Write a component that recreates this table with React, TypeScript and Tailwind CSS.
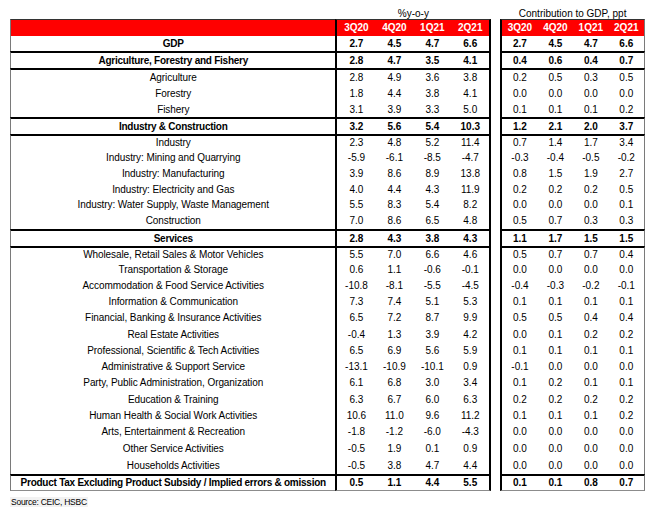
import React from 'react';

type Row = {
  label: string;
  bold?: boolean;
  line?: boolean;
  last?: boolean;
  h: string;
  yoy: string[];
  ppt: string[];
};

const rows: Row[] = [
  { label: 'GDP', bold: true, h: 'h-[15px]', yoy: ['2.7', '4.5', '4.7', '6.6'], ppt: ['2.7', '4.5', '4.7', '6.6'] },
  { label: 'Agriculture, Forestry and Fishery', bold: true, line: true, h: 'h-[17px]', yoy: ['2.8', '4.7', '3.5', '4.1'], ppt: ['0.4', '0.6', '0.4', '0.7'] },
  { label: 'Agriculture', line: true, h: 'h-[18px]', yoy: ['2.8', '4.9', '3.6', '3.8'], ppt: ['0.2', '0.5', '0.3', '0.5'] },
  { label: 'Forestry', h: 'h-[16px]', yoy: ['1.8', '4.4', '3.8', '4.1'], ppt: ['0.0', '0.0', '0.0', '0.0'] },
  { label: 'Fishery', h: 'h-[15px]', yoy: ['3.1', '3.9', '3.3', '5.0'], ppt: ['0.1', '0.1', '0.1', '0.2'] },
  { label: 'Industry & Construction', bold: true, line: true, h: 'h-[17px]', yoy: ['3.2', '5.6', '5.4', '10.3'], ppt: ['1.2', '2.1', '2.0', '3.7'] },
  { label: 'Industry', line: true, h: 'h-[16px]', yoy: ['2.3', '4.8', '5.2', '11.4'], ppt: ['0.7', '1.4', '1.7', '3.4'] },
  { label: 'Industry: Mining and Quarrying', h: 'h-[16px]', yoy: ['-5.9', '-6.1', '-8.5', '-4.7'], ppt: ['-0.3', '-0.4', '-0.5', '-0.2'] },
  { label: 'Industry: Manufacturing', h: 'h-[16px]', yoy: ['3.9', '8.6', '8.9', '13.8'], ppt: ['0.8', '1.5', '1.9', '2.7'] },
  { label: 'Industry: Electricity and Gas', h: 'h-[15px]', yoy: ['4.0', '4.4', '4.3', '11.9'], ppt: ['0.2', '0.2', '0.2', '0.5'] },
  { label: 'Industry: Water Supply, Waste Management', h: 'h-[16px]', yoy: ['5.5', '8.3', '5.4', '8.2'], ppt: ['0.0', '0.0', '0.0', '0.1'] },
  { label: 'Construction', h: 'h-[16px]', yoy: ['7.0', '8.6', '6.5', '4.8'], ppt: ['0.5', '0.7', '0.3', '0.3'] },
  { label: 'Services', bold: true, line: true, h: 'h-[17px]', yoy: ['2.8', '4.3', '3.8', '4.3'], ppt: ['1.1', '1.7', '1.5', '1.5'] },
  { label: 'Wholesale, Retail Sales & Motor Vehicles', line: true, h: 'h-[16px]', yoy: ['5.5', '7.0', '6.6', '4.6'], ppt: ['0.5', '0.7', '0.7', '0.4'] },
  { label: 'Transportation & Storage', h: 'h-[16px]', yoy: ['0.6', '1.1', '-0.6', '-0.1'], ppt: ['0.0', '0.0', '0.0', '0.0'] },
  { label: 'Accommodation & Food Service Activities', h: 'h-[16px]', yoy: ['-10.8', '-8.1', '-5.5', '-4.5'], ppt: ['-0.4', '-0.3', '-0.2', '-0.1'] },
  { label: 'Information & Communication', h: 'h-[16px]', yoy: ['7.3', '7.4', '5.1', '5.3'], ppt: ['0.1', '0.1', '0.1', '0.1'] },
  { label: 'Financial, Banking & Insurance Activities', h: 'h-[16px]', yoy: ['6.5', '7.2', '8.7', '9.9'], ppt: ['0.5', '0.5', '0.4', '0.4'] },
  { label: 'Real Estate Activities', h: 'h-[17px]', yoy: ['-0.4', '1.3', '3.9', '4.2'], ppt: ['0.0', '0.1', '0.2', '0.2'] },
  { label: 'Professional, Scientific & Tech Activities', h: 'h-[16px]', yoy: ['6.5', '6.9', '5.6', '5.9'], ppt: ['0.1', '0.1', '0.1', '0.1'] },
  { label: 'Administrative & Support Service', h: 'h-[16px]', yoy: ['-13.1', '-10.9', '-10.1', '0.9'], ppt: ['-0.1', '0.0', '0.0', '0.0'] },
  { label: 'Party, Public Administration, Organization', h: 'h-[16px]', yoy: ['6.1', '6.8', '3.0', '3.4'], ppt: ['0.1', '0.2', '0.1', '0.1'] },
  { label: 'Education & Training', h: 'h-[17px]', yoy: ['6.3', '6.7', '6.0', '6.3'], ppt: ['0.2', '0.2', '0.2', '0.2'] },
  { label: 'Human Health & Social Work Activities', h: 'h-[16px]', yoy: ['10.6', '11.0', '9.6', '11.2'], ppt: ['0.1', '0.1', '0.1', '0.2'] },
  { label: 'Arts, Entertainment & Recreation', h: 'h-[16px]', yoy: ['-1.8', '-1.2', '-6.0', '-4.3'], ppt: ['0.0', '0.0', '0.0', '0.0'] },
  { label: 'Other Service Activities', h: 'h-[17px]', yoy: ['-0.5', '1.9', '0.1', '0.9'], ppt: ['0.0', '0.0', '0.0', '0.0'] },
  { label: 'Households Activities', h: 'h-[17px]', yoy: ['-0.5', '3.8', '4.7', '4.4'], ppt: ['0.0', '0.0', '0.0', '0.0'] },
  {
    label: 'Product Tax Excluding Product Subsidy / Implied errors & omission',
    bold: true,
    line: true,
    last: true,
    h: 'h-[17px]',
    yoy: ['0.5', '1.1', '4.4', '5.5'],
    ppt: ['0.1', '0.1', '0.8', '0.7'],
  },
];

const quarters = ['3Q20', '4Q20', '1Q21', '2Q21'];

const Cells: React.FC<{ values: string[]; bold?: boolean }> = ({ values, bold }) => (
  <>
    {values.map((v, i) => (
      <div key={i} className={`flex items-center justify-center ${bold ? 'font-bold' : ''}`}>
        {v}
      </div>
    ))}
  </>
);

const TableRow: React.FC<{ row: Row }> = ({ row }) => {
  const top = row.line ? 'border-t-2 border-t-black' : '';
  const bottom = row.last ? 'border-b border-b-[#8c8c8c]' : '';
  return (
    <div className={`flex ${row.h}`}>
      <div
        className={`flex w-[326px] items-center justify-center whitespace-nowrap border-l border-l-[#7a7a7a] ${top} ${bottom} ${
          row.bold ? 'font-bold tracking-[-0.25px]' : 'tracking-[-0.08px]'
        }`}
      >
        {row.label}
      </div>
      <div className={`grid w-[156px] grid-cols-4 border-x-2 border-x-black ${top} ${bottom}`}>
        <Cells values={row.yoy} bold={row.bold} />
      </div>
      <div className="w-[9px]" />
      <div className={`grid w-[145px] grid-cols-4 border-l-2 border-r border-l-black border-r-[#7a7a7a] ${top} ${bottom}`}>
        <Cells values={row.ppt} bold={row.bold} />
      </div>
    </div>
  );
};

export default function App() {
  return (
    <div className="min-h-screen bg-white px-[10px] text-[10px] leading-[12px] text-black [font-family:'Liberation_Sans',Arial,sans-serif]">
      <div className="flex h-[19px] items-start pt-[8px]">
        <div className="w-[326px]" />
        <div className="w-[156px] text-center">%y-o-y</div>
        <div className="w-[9px]" />
        <div className="w-[145px] text-center">Contribution to GDP, ppt</div>
      </div>

      <div className="flex h-[17px]">
        <div className="w-[326px] border-l border-t border-l-[#7a7a7a] border-t-[#333] bg-[#ff0000]" />
        <div className="grid w-[156px] grid-cols-4 border-x-2 border-t border-x-black border-t-[#333] bg-[#ff0000] font-bold text-white">
          {quarters.map((q) => (
            <div key={q} className="flex items-center justify-center">
              {q}
            </div>
          ))}
        </div>
        <div className="w-[9px]" />
        <div className="grid w-[145px] grid-cols-4 border-l-2 border-r border-t border-l-black border-r-[#7a7a7a] border-t-[#333] bg-[#ff0000] font-bold text-white">
          {quarters.map((q) => (
            <div key={q} className="flex items-center justify-center">
              {q}
            </div>
          ))}
        </div>
      </div>

      {rows.map((row) => (
        <TableRow key={row.label} row={row} />
      ))}

      <div className="mt-[5px] leading-[11px]">
        <span className="bg-[#f2f2f2] px-[1px] text-[8.5px] tracking-[-0.25px]">Source: CEIC, HSBC</span>
      </div>
    </div>
  );
}
